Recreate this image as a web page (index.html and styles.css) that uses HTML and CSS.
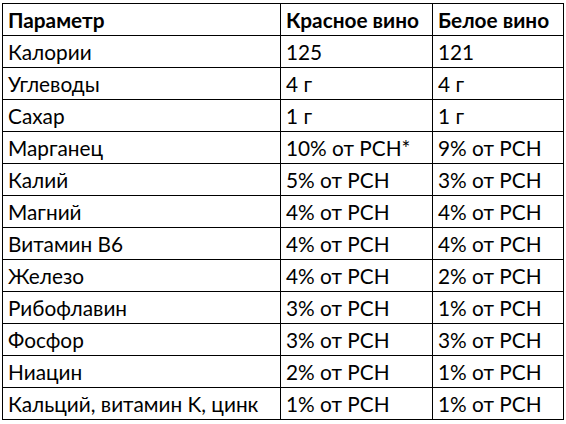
FILE: index.html
```html
<!DOCTYPE html>
<html lang="ru">
<head>
<meta charset="utf-8">
<link rel="stylesheet" href="styles.css">
</head>
<body>
<table class="nutrition">
  <colgroup>
    <col class="c-param">
    <col class="c-red">
    <col class="c-white">
  </colgroup>
  <thead>
    <tr><th>Параметр</th><th>Красное вино</th><th>Белое вино</th></tr>
  </thead>
  <tbody>
    <tr><td>Калории</td><td>125</td><td>121</td></tr>
    <tr><td>Углеводы</td><td>4 г</td><td>4 г</td></tr>
    <tr><td>Сахар</td><td>1 г</td><td>1 г</td></tr>
    <tr><td>Марганец</td><td>10% от РСН*</td><td>9% от РСН</td></tr>
    <tr><td>Калий</td><td>5% от РСН</td><td>3% от РСН</td></tr>
    <tr><td>Магний</td><td>4% от РСН</td><td>4% от РСН</td></tr>
    <tr><td>Витамин B6</td><td>4% от РСН</td><td>4% от РСН</td></tr>
    <tr><td>Железо</td><td>4% от РСН</td><td>2% от РСН</td></tr>
    <tr><td>Рибофлавин</td><td>3% от РСН</td><td>1% от РСН</td></tr>
    <tr><td>Фосфор</td><td>3% от РСН</td><td>3% от РСН</td></tr>
    <tr><td>Ниацин</td><td>2% от РСН</td><td>1% от РСН</td></tr>
    <tr><td>Кальций, витамин K, цинк</td><td>1% от РСН</td><td>1% от РСН</td></tr>
  </tbody>
</table>
</body>
</html>
```
FILE: styles.css
```css
html, body {
  margin: 0;
  background: #fff;
}
body {
  padding: 3px 0 0 2px;
  font-family: Lato, "Open Sans", sans-serif;
  font-size: 20.8px;
  color: #000;
}
.nutrition {
  border-collapse: collapse;
  table-layout: fixed;
  width: 561px;
}
.c-param { width: 278px; }
.c-red { width: 152px; }
.c-white { width: 131px; }
.nutrition th,
.nutrition td {
  border: 1px solid #000;
  height: 32px;
  padding: 0 5px;
  text-align: left;
  vertical-align: middle;
  white-space: nowrap;
  line-height: 25px;
  box-sizing: border-box;
}
.nutrition th {
  font-weight: 700;
}
```
